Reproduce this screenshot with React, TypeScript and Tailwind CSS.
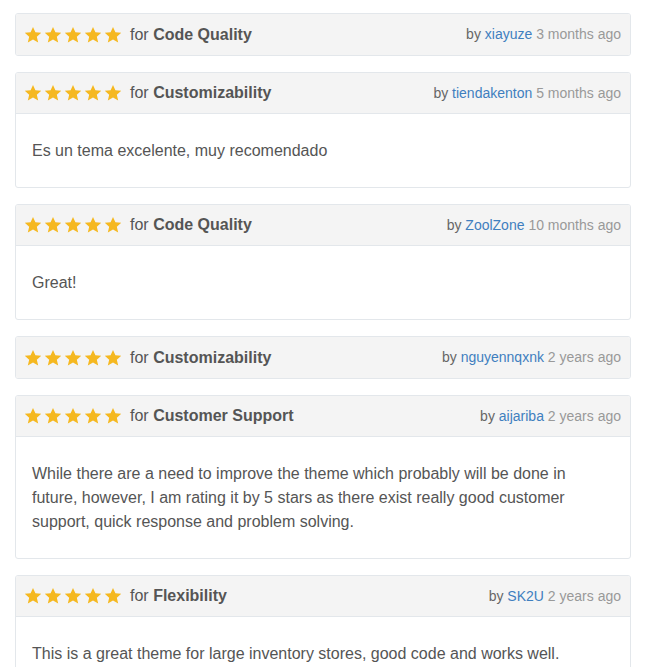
import React from "react";

type Review = {
  category: string;
  user: string;
  when: string;
  text?: string;
};

const reviews: Review[] = [
  { category: "Code Quality", user: "xiayuze", when: "3 months ago" },
  {
    category: "Customizability",
    user: "tiendakenton",
    when: "5 months ago",
    text: "Es un tema excelente, muy recomendado",
  },
  { category: "Code Quality", user: "ZoolZone", when: "10 months ago", text: "Great!" },
  { category: "Customizability", user: "nguyennqxnk", when: "2 years ago" },
  {
    category: "Customer Support",
    user: "aijariba",
    when: "2 years ago",
    text: "While there are a need to improve the theme which probably will be done in future, however, I am rating it by 5 stars as there exist really good customer support, quick response and problem solving.",
  },
  {
    category: "Flexibility",
    user: "SK2U",
    when: "2 years ago",
    text: "This is a great theme for large inventory stores, good code and works well.",
  },
];

function Star() {
  return (
    <svg width="18" height="18" viewBox="0 0 24 24" className="shrink-0">
      <polygon
        fill="#f5b820"
        points="12,1.2 15.2,8.4 23,9.1 17.1,14.3 18.9,22 12,17.9 5.1,22 6.9,14.3 1,9.1 8.8,8.4"
      />
    </svg>
  );
}

export default function App() {
  return (
    <div
      className="min-h-screen bg-white px-[15px] pt-[13px] flex flex-col gap-4"
      style={{ fontFamily: '"Liberation Sans", Arial, sans-serif' }}
    >
      {reviews.map((r, i) => (
        <div key={i} className="border border-[#e3e7eb] rounded-[3px] overflow-hidden">
          <div
            className={
              "h-[41px] bg-[#f4f4f4] flex items-center justify-between pl-2 pr-[9px] " +
              (r.text ? "border-b border-[#e3e7eb]" : "")
            }
          >
            <div className="flex items-center">
              <div className="flex gap-[2px]">
                <Star />
                <Star />
                <Star />
                <Star />
                <Star />
              </div>
              <span className="ml-2 text-[16px] text-[#555]">
                for <b className="font-bold">{r.category}</b>
              </span>
            </div>
            <div className="text-[14px] text-[#666]">
              by <span className="text-[#3f7fbf]">{r.user}</span>{" "}
              <span className="text-[#999]">{r.when}</span>
            </div>
          </div>
          {r.text && (
            <div className="px-4 pt-[25px] pb-6 text-[16px] leading-6 text-[#555]">{r.text}</div>
          )}
        </div>
      ))}
    </div>
  );
}
